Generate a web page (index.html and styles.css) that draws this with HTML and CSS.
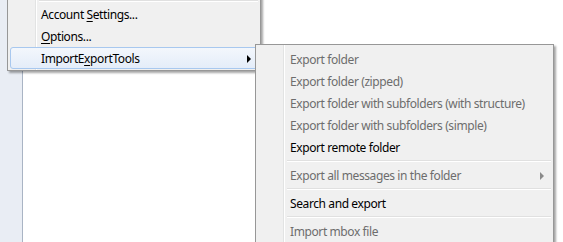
FILE: index.html
```html
<!DOCTYPE html>
<html lang="en">
<head>
  <meta charset="UTF-8" />
  <title>ImportExportTools menu</title>
  <link rel="stylesheet" href="styles.css">
</head>
<body>
  <div class="window">
    <div class="folder-pane"></div>
    <div class="message-pane"></div>
  </div>

  <div class="menu main-menu">
    <div class="sep"></div>
    <div class="item">Account <u>S</u>ettings...</div>
    <div class="item"><u>O</u>ptions...</div>
    <div class="item active has-sub">ImportE<u>x</u>portTools</div>
  </div>

  <div class="menu sub-menu">
    <div class="item disabled">Export folder</div>
    <div class="item disabled">Export folder (zipped)</div>
    <div class="item disabled">Export folder with subfolders (with structure)</div>
    <div class="item disabled">Export folder with subfolders (simple)</div>
    <div class="item">Export remote folder</div>
    <div class="sep"></div>
    <div class="item disabled has-sub">Export all messages in the folder</div>
    <div class="sep"></div>
    <div class="item">Search and export</div>
    <div class="sep"></div>
    <div class="item disabled">Import mbox file</div>
  </div>
</body>
</html>
```

FILE: styles.css
```css
html, body {
  margin: 0;
  height: 100%;
  overflow: hidden;
}
body {
  font-family: "Noto Sans", "Liberation Sans", sans-serif;
  font-size: 12px;
  letter-spacing: -0.4px;
  background: #fff;
}
.window {
  display: flex;
  height: 242px;
}
.folder-pane {
  width: 22px;
  background: #e9edf4;
  border-right: 1px solid #a9b4c4;
}
.message-pane {
  flex: 1;
  background: #fff;
}

/* menus float over the window */
.menu {
  position: absolute;
  background: #f0f0f0;
  border: 1px solid #979797;
  padding: 2px;
  box-shadow: 2px 2px 2px rgba(0, 0, 0, 0.35);
  background-image: linear-gradient(to right, transparent 27px, #e2e3e3 27px, #e2e3e3 28px, #fff 28px, #fff 29px, transparent 29px);
}
.main-menu {
  left: 7px;
  top: -6px;
  width: 248px;
  padding-bottom: 1px;
}
.sub-menu {
  left: 255px;
  top: 44px;
  width: 293px;
  padding-top: 3px;
}
.item {
  position: relative;
  height: 22px;
  line-height: 22px;
  padding-left: 31px;
  color: #000;
  white-space: nowrap;
  border: 1px solid transparent;
  border-radius: 3px;
  box-sizing: border-box;
}
.main-menu .item {
  padding-left: 30px;
}
.item.disabled {
  color: #6d6d6d;
}
.item.active {
  border-color: #a8c8ef;
  background: linear-gradient(#f3f7fc, #e4edf9);
}
.item.has-sub::after {
  content: "";
  position: absolute;
  right: 6px;
  top: 7px;
  border-left: 4px solid #000;
  border-top: 4px solid transparent;
  border-bottom: 4px solid transparent;
}
.item.disabled.has-sub::after {
  border-left-color: #8a8a8a;
}
.sep {
  height: 6px;
  margin-left: 29px;
  background: linear-gradient(transparent 2px, #e0e0e0 2px, #e0e0e0 3px, #fff 3px, #fff 4px, transparent 4px);
}
.main-menu .sep {
  background: linear-gradient(transparent 3px, #e0e0e0 3px, #e0e0e0 4px, #fff 4px, #fff 5px, transparent 5px);
}
u {
  text-underline-offset: 2px;
}
```
